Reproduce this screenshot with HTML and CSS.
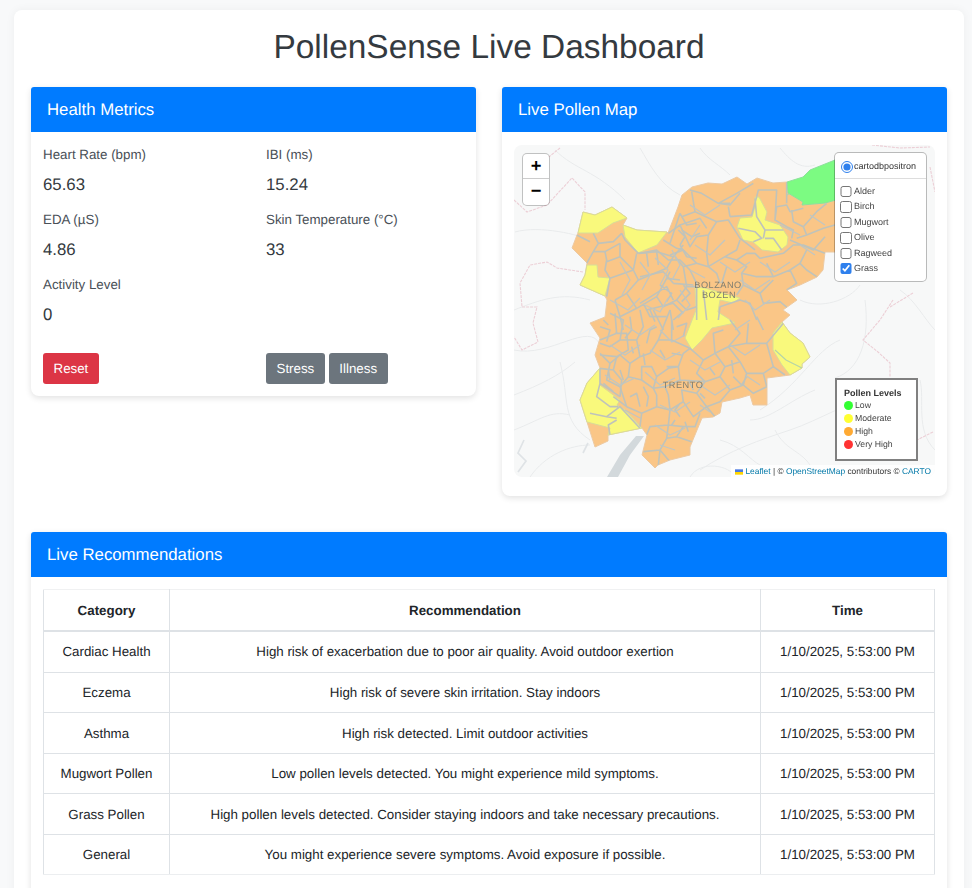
FILE: index.html
```html
<!DOCTYPE html>
<html lang="en">
<head>
<meta charset="utf-8">
<title>PollenSense Live Dashboard</title>
<link rel="stylesheet" href="styles.css">
</head>
<body>
<main class="shell">
  <h1 class="title">PollenSense Live Dashboard</h1>
  <div class="columns">
    <section class="card metrics-card">
      <header class="card-head">Health Metrics</header>
      <div class="card-body">
        <div class="metrics">
          <div class="metric"><div class="metric-label">Heart Rate (bpm)</div><div class="metric-value">65.63</div></div>
          <div class="metric"><div class="metric-label">IBI (ms)</div><div class="metric-value">15.24</div></div>
          <div class="metric"><div class="metric-label">EDA (µS)</div><div class="metric-value">4.86</div></div>
          <div class="metric"><div class="metric-label">Skin Temperature (°C)</div><div class="metric-value">33</div></div>
          <div class="metric"><div class="metric-label">Activity Level</div><div class="metric-value">0</div></div>
        </div>
        <div class="actions">
          <div><button class="btn btn-red">Reset</button></div>
          <div class="btn-group"><button class="btn btn-grey">Stress</button><button class="btn btn-grey">Illness</button></div>
        </div>
      </div>
    </section>
    <section class="card map-card">
      <header class="card-head">Live Pollen Map</header>
      <div class="card-body map-body">
        <div class="map">
          <svg class="map-svg" viewBox="514 145 421 332" width="421" height="332">
            <defs>
              <filter id="soft" x="-5%" y="-5%" width="110%" height="110%" color-interpolation-filters="sRGB"><feGaussianBlur stdDeviation="0.75"/></filter>
              <clipPath id="region"><path d="M583,212 595,215 612,207 627,218 623,225 637,230 667,232 668,233 673,220 678,207 682,195 692,187 708,183 722,184 737,177 747,184 757,178 773,183 787,182 788,193 803,202 802,205 825,203 836,200 836,252 825,252 823,270 817,277 800,285 787,290 797,300 783,310 790,315 782,322 790,333 803,343 810,357 802,364 802,368 790,375 767,378 767,405 753,405 750,395 740,398 722,402 720,413 713,417 702,418 690,447 690,455 670,460 658,465 655,468 642,455 647,435 642,428 608,435 608,441 595,447 587,422 580,400 587,383 600,368 595,355 600,338 590,323 605,317 607,300 605,296 580,285 585,275 587,263 572,248 577,235 578,233Z"/></clipPath>
            </defs>
            <rect class="m-land" x="514" y="145" width="421" height="332"/>
            <g filter="url(#soft)">
              <path class="m-terrain" d="M514,310 C540,300 560,292 590,300 M514,350 C550,358 590,320 600,345 M514,395 C540,385 560,375 575,362 M560,362 C570,400 560,420 590,440 M514,430 C540,420 550,410 570,415 M530,477 C545,455 570,445 590,445 M555,150 C575,170 595,170 625,200 M515,232 C540,225 580,235 590,240 M640,148 C650,165 660,185 680,195 M700,148 C708,160 720,165 730,175 M780,148 C790,160 800,170 815,165 M700,470 C730,450 760,440 790,430 C820,420 850,400 880,395 M800,300 C820,310 850,300 860,285 M865,300 C870,340 860,370 835,378 M750,420 C770,420 790,400 815,390 M840,340 C815,350 800,385 760,410 M690,477 C700,460 730,465 735,477 M900,290 C915,300 925,320 935,330 M920,380 C925,400 915,430 935,450 M775,430 C785,450 800,450 810,465 M720,440 C740,445 750,460 760,465"/>
              <path class="m-border" d="M514,200 527,212 547,205 558,193 572,178 585,192 585,210 M583,272 557,268 547,262 530,265 520,283 522,307 537,307 533,323 538,342 522,350 514,337 M893,300 880,320 863,340 878,352 890,363 890,377 M933,432 917,440 M872,145 900,148 930,147 M930,167 935,192 M913,293 890,307 M560,148 545,160"/>
              <path class="m-lake" d="M636,436 644,436 630,455 618,477 607,477 620,455Z"/>
              <path class="m-river" d="M524,440 518,453 526,461 518,472 M588,443 583,453"/>
              <path class="m-orange" d="M583,212 595,215 612,207 627,218 623,225 637,230 667,232 668,233 673,220 678,207 682,195 692,187 708,183 722,184 737,177 747,184 757,178 773,183 787,182 788,193 803,202 802,205 825,203 836,200 836,252 825,252 823,270 817,277 800,285 787,290 797,300 783,310 790,315 782,322 790,333 803,343 810,357 802,364 802,368 790,375 767,378 767,405 753,405 750,395 740,398 722,402 720,413 713,417 702,418 690,447 690,455 670,460 658,465 655,468 642,455 647,435 642,428 608,435 608,441 595,447 587,422 580,400 587,383 600,368 595,355 600,338 590,323 605,317 607,300 605,296 580,285 585,275 587,263 572,248 577,235 578,233Z"/>
              <g class="m-yellow">
                <path d="M583,212 595,215 612,207 627,218 613,223 598,233 578,233Z"/>
                <path d="M623,225 637,230 667,232 657,245 638,253 625,237Z"/>
                <path d="M587,265 597,265 598,277 610,278 605,296 580,285 585,275Z"/>
                <path d="M755,197 759,197 767,212 765,220 780,225 788,237 787,245 778,252 762,250 753,242 743,240 737,227 740,218 752,217 755,207Z"/>
                <path d="M695,287 705,288 740,298 733,303 720,300 718,312 735,323 712,328 702,340 692,350 685,338 696,310Z"/>
                <path d="M782,322 790,333 803,343 810,357 802,364 802,368 790,375 782,365 773,350 773,333Z"/>
                <path d="M600,368 587,383 580,400 587,422 610,428 608,435 642,428 625,410 617,405 620,400 600,385Z"/>
              </g>
              <path class="m-green" d="M787,182 803,177 810,170 835,160 836,200 825,203 802,205 803,202 788,193Z"/>
              <g clip-path="url(#region)">
                <g class="m-lines" transform="translate(640 170) scale(.33333)">
                  <path d="M150,60 185,70 235,100 290,70 340,40 M235,100 270,105 300,70 M235,100H270 M155,65 165,125 230,155 265,150 300,205 320,220 M265,110 270,140 M270,140 335,135 350,80 M125,140 165,125 M85,190 120,165 150,230 170,200 205,195 230,155 M120,165 180,145 200,175 M205,195 200,250 205,290 M300,210 290,240 255,260 205,290 170,280 130,240 90,255 M70,210 110,235 130,240 M0,250 50,240 85,270 120,270 150,300 170,340 M255,260 290,270 320,250 345,250 360,265 M320,220 345,240 M360,265 430,250 460,225 490,225 555,250 M290,270 320,290 305,310 350,320 400,320 450,300 480,280 500,240 M450,210 520,240 555,200 M455,205 460,180 440,170 405,150 410,110 440,105 450,125 490,115 M350,80 355,60 410,60 405,150 M440,35 440,100 M455,120 460,155 490,170 500,195 550,175 585,165 M490,170 530,125 560,100 M500,195 470,205 M400,320 380,280 M480,280 500,300 530,320 M450,300 470,340 440,360 M305,310 310,345 290,375 M310,345 360,370 400,330 M360,370 370,400 420,395 450,420 M240,410 300,390 330,400 350,450 M240,410 235,450 M205,290 230,310 240,340 M260,290 245,340 M0,320 70,305 100,340 M0,400 80,350 100,390 M100,340 160,345 M20,420 100,400 130,430 M170,340V450 M190,360 200,450 M345,85 350,140 375,180 430,180 M295,175 345,185 365,205 340,215 M375,205 400,205 425,240 M375,180 370,205 M115,180 135,200 120,225 M60,345 95,370 80,395 M130,345 150,370 125,395"/>
                </g>
                <g class="m-lines" transform="translate(570 200) scale(.33333)">
                  <path d="M50,190 70,155 85,130 70,100 M20,105 60,125 M85,130 130,125 155,100 M155,100 165,120 205,160 M70,155 105,155 110,180 105,210 120,235 M105,155 150,130 M150,130 150,170 110,185 M150,170 190,210 200,160 M190,210 120,235 M120,235 110,290 M190,210 205,240 170,280 135,300 M205,240 290,205 310,170 340,135 M205,160 260,155 310,170 M230,160 235,200 M260,155 265,195 M170,280 200,325 260,290 290,235 300,215 M135,300 150,350 200,325 M150,350 160,390 M260,290 280,320 320,300 350,260 380,260 M290,235 330,240 M300,130 330,40 M330,135 350,170 380,175 M315,170 340,200 380,190 M340,200 350,260 M220,310 240,350 290,350 M250,330 280,390 M300,330 310,390 M320,300 350,330 380,320 M340,335 310,360 M330,40 350,75 380,70 M335,90 365,110 390,100"/>
                </g>
                <g class="m-lines" transform="translate(600 310) scale(.33333)">
                  <path d="M0,100 30,110 60,90 70,30 30,10 M60,90 110,90 130,50 120,0 M110,90 120,140 150,130 175,90 190,50 210,0 M175,90 215,90 215,30 M215,90 270,115 250,130 235,170 200,170 M0,130 30,160 60,135 90,160 120,140 M30,160 20,210 60,230 85,200 90,160 M85,200 125,210 125,170 155,170 170,200 160,235 125,210 M170,200 205,175 235,170 240,210 195,230 160,235 M60,230 80,290 125,310 170,290 170,255 160,235 M125,310 120,350 M80,290 40,260 M170,290 210,300 205,255 195,230 M210,300 250,275 245,240 290,250 315,215 240,210 M270,115 310,150 345,130 385,110 440,100 445,40 M310,150 290,190 315,215 360,200 375,170 345,130 M360,200 390,240 360,275 M375,170 420,155 440,190 430,225 390,240 M430,225 460,250 500,230 M440,190 490,190 520,170 500,100 440,100 M490,190 500,230 M500,100 550,40 M520,170 555,195 M385,110 420,155 M345,130 340,70 370,60 M290,250 320,290 360,275 M320,290 345,320 M250,275 280,320 300,305 320,290 M210,300 205,345 150,350 140,375 M205,345 200,385 230,380 275,395 M205,345 250,350 285,350 300,310 M250,350 230,380 M200,385 180,420 130,425 M180,420 210,455 M180,420 175,465 M240,280 225,300 240,320 M300,250 315,265 M400,200 425,225 440,200 M130,230 145,260 140,290 M90,260 110,250 120,290 M30,210 25,180 M10,220 40,245 M170,50 150,60 140,100 M230,50 260,40 250,80 M0,50 30,60 20,95 M90,20 95,60 75,85 M150,0 165,35 M390,30 420,70 385,110 M470,20 490,60 M395,150 400,190 M330,175 345,195 M215,130 245,135 M265,210 280,240 M100,130 95,110 M60,180 70,210 M180,120 195,145 M130,130 135,165 M255,335 265,365 M225,330 215,345"/>
                </g>
                <g class="m-lines" transform="translate(500 300) scale(.33333)">
                  <path d="M300,250 290,290 330,320 355,320 M270,340 320,350 360,320 420,385 M320,350 350,355 M300,205 300,250 360,290 M330,405 325,375 350,360 M310,60 325,75 M300,120 350,100 345,40 M300,205 340,210 350,170 300,165 M350,170 385,150 380,100 345,100 M340,210 365,240 360,290"/>
                </g>
                <path class="m-lines-fine" d="M640,262 650,275 642,290 M655,258 668,270 660,285 M672,250 680,265 672,280 M620,262 630,280 622,295 M610,300 628,310 640,298 M645,305 660,312 668,298 M680,290 690,305 678,318 M625,325 640,335 655,325 M660,330 672,342 685,335 M610,345 625,355 640,345 M650,350 665,360 680,352 M605,375 620,385 635,378 M645,372 660,385 675,378 M690,360 705,370 720,362 M730,345 745,355 760,345 M770,300 755,310 745,300 M735,330 750,320 M700,385 715,395 730,385 M745,375 760,385 M660,405 675,412 690,402 M700,405 710,412 M625,410 640,418 M655,425 670,435 685,428 M660,445 675,450 M720,262 735,272 750,262 M760,262 775,272 790,262 M800,245 815,255 M690,205 705,215 720,205 M725,240 710,255 695,245 M690,270 705,278 M740,280 755,290 770,280 M780,225 800,235 M810,215 825,225 M700,225 690,240"/>
                <path class="m-lines-thin" d="M775,350 786,360 802,368 M824,165 836,161 M787,195 826,178 836,172 M803,205 825,195 826,178"/>
              </g>
              <g class="m-labels">
                <text x="718" y="288">BOLZANO</text>
                <text x="719" y="298">BOZEN</text>
                <text x="683" y="388">TRENTO</text>
              </g>
            </g>
          </svg>
          <div class="zoom-ctl">
            <a class="zoom-btn">+</a>
            <a class="zoom-btn">−</a>
          </div>
          <form class="layers">
            <label class="layer-row layer-base"><input class="layer-radio" type="radio" checked><span>cartodbpositron</span></label>
            <div class="layer-sep"></div>
            <label class="layer-row"><input class="layer-check" type="checkbox"><span>Alder</span></label>
            <label class="layer-row"><input class="layer-check" type="checkbox"><span>Birch</span></label>
            <label class="layer-row"><input class="layer-check" type="checkbox"><span>Mugwort</span></label>
            <label class="layer-row"><input class="layer-check" type="checkbox"><span>Olive</span></label>
            <label class="layer-row"><input class="layer-check" type="checkbox"><span>Ragweed</span></label>
            <label class="layer-row"><input class="layer-check" type="checkbox" checked><span>Grass</span></label>
          </form>
          <div class="legend">
            <div class="legend-title">Pollen Levels</div>
            <div class="legend-row"><i class="dot dot-low"></i>Low</div>
            <div class="legend-row"><i class="dot dot-mod"></i>Moderate</div>
            <div class="legend-row"><i class="dot dot-high"></i>High</div>
            <div class="legend-row"><i class="dot dot-vhigh"></i>Very High</div>
          </div>
          <div class="attrib"><svg class="flag" viewBox="0 0 12 8" width="8" height="6"><rect width="12" height="4" fill="#4C7BE1"/><rect y="4" width="12" height="4" fill="#FFD500"/></svg> <a>Leaflet</a> | © <a>OpenStreetMap</a> contributors © <a>CARTO</a></div>
        </div>
      </div>
    </section>
  </div>
  <section class="card rec-card">
    <header class="card-head">Live Recommendations</header>
    <div class="card-body rec-body">
      <table class="rec-table">
        <colgroup><col class="col-cat"><col class="col-rec"><col class="col-time"></colgroup>
        <thead><tr><th>Category</th><th>Recommendation</th><th>Time</th></tr></thead>
        <tbody>
          <tr><td>Cardiac Health</td><td>High risk of exacerbation due to poor air quality. Avoid outdoor exertion</td><td>1/10/2025, 5:53:00 PM</td></tr>
          <tr><td>Eczema</td><td>High risk of severe skin irritation. Stay indoors</td><td>1/10/2025, 5:53:00 PM</td></tr>
          <tr><td>Asthma</td><td>High risk detected. Limit outdoor activities</td><td>1/10/2025, 5:53:00 PM</td></tr>
          <tr><td>Mugwort Pollen</td><td>Low pollen levels detected. You might experience mild symptoms.</td><td>1/10/2025, 5:53:00 PM</td></tr>
          <tr><td>Grass Pollen</td><td>High pollen levels detected. Consider staying indoors and take necessary precautions.</td><td>1/10/2025, 5:53:00 PM</td></tr>
          <tr><td>General</td><td>You might experience severe symptoms. Avoid exposure if possible.</td><td>1/10/2025, 5:53:00 PM</td></tr>
        </tbody>
      </table>
    </div>
  </section>
</main>
</body>
</html>
```
FILE: styles.css
```css
* { box-sizing: border-box; }
html, body { height: 888px; overflow: hidden; }
body {
  margin: 0;
  padding: 10px 8px 0 14px;
  background: #f8f9fa;
  font-family: "Liberation Sans", Arial, sans-serif;
  font-size: 13.33px;
  line-height: 1.5;
  color: #212529;
  text-rendering: geometricPrecision;
}
.shell {
  background: #fff;
  border-radius: 8px;
  padding: 17px 17px 0;
  box-shadow: 0 0 10px rgba(0,0,0,.05);
}
.title {
  margin: 0 0 18px;
  text-align: center;
  font-size: 33.44px;
  font-weight: 400;
  line-height: 42px;
  color: #343a40;
}
.columns {
  display: grid;
  grid-template-columns: 445px 445px;
  gap: 26px;
  align-items: start;
  margin-bottom: 36px;
}
.card {
  background: #fff;
  border-radius: 3px 3px 8px 8px;
  box-shadow: 0 2px 6px rgba(0,0,0,.12);
}
.card-head {
  background: #007bff;
  color: #fff;
  font-size: 16.8px;
  line-height: 46px;
  height: 45px;
  padding: 0 16px;
  border-radius: 3px 3px 0 0;
}
.card-body { padding: 12px; }
.metrics {
  display: grid;
  grid-template-columns: 223px 1fr;
}
.metric { height: 65px; }
.metric-label {
  color: #495057;
  line-height: 21px;
}
.metric-value {
  margin-top: 7px;
  font-size: 16.8px;
  line-height: 26px;
  color: #343a40;
}
.actions {
  display: grid;
  grid-template-columns: 223px 1fr;
  margin-top: 14px;
}
.btn-group { display: flex; gap: 4px; }
.btn {
  display: block;
  height: 31px;
  padding: 0 10.5px;
  border: 0;
  border-radius: 3px;
  font: inherit;
  line-height: 31px;
  color: #fff;
  text-rendering: geometricPrecision;
}
.btn-red { background: #dc3545; }
.btn-grey { background: #6c757d; }

.map-body { padding: 13px 12px 19px; }
.map {
  position: relative;
  width: 421px;
  height: 332px;
  border-radius: 8px;
  overflow: hidden;
}
.map-svg { display: block; }
.m-land { fill: #f7f8f8; }
.m-terrain { fill: none; stroke: #e9ebec; stroke-width: 1; }
.m-border { fill: none; stroke: #eccfd6; stroke-width: 1.1; stroke-dasharray: 3 1; }
.m-lake { fill: #d3d9dc; }
.m-river { fill: none; stroke: #dfe3e6; stroke-width: 1.7; }
.m-orange { fill: #fac687; stroke: #ecc9a2; stroke-width: 1; }
.m-yellow path { fill: #f9f97c; stroke: #d8dc98; stroke-width: 1; }
.m-green { fill: #7cfb82; stroke: #8ce09a; stroke-width: 1; }
.m-lines { fill: none; stroke: #bfc3bb; stroke-width: 4.8; stroke-linejoin: round; }
.m-lines-fine { fill: none; stroke: #c0c6c2; stroke-width: 1.3; stroke-linejoin: round; }
.m-lines-thin { fill: none; stroke: #b5d4a8; stroke-width: 1.2; }
.m-labels text {
  font-size: 9.2px;
  letter-spacing: .5px;
  text-anchor: middle;
  fill: #7f7e70;
}

.zoom-ctl {
  position: absolute;
  left: 9px;
  top: 9px;
  width: 26px;
  background: #fff;
  border-radius: 4px;
  box-shadow: 0 0 0 1px rgba(0,0,0,.22);
  overflow: hidden;
}
.zoom-btn {
  display: block;
  height: 25px;
  text-align: center;
  font: 700 17px/24px "DejaVu Sans Mono", monospace;
  color: #000;
  border-bottom: 1px solid #ccc;
}
.zoom-btn:last-child { border-bottom: 0; height: 26px; }

.layers {
  position: absolute;
  left: 321px;
  top: 8px;
  width: 91px;
  height: 128px;
  margin: 0;
  padding: 7px 5px;
  background: #fff;
  border-radius: 4px;
  box-shadow: 0 0 0 1px rgba(0,0,0,.25);
  font-size: 9px;
  line-height: 15.4px;
  color: #444;
  filter: blur(.25px);
}
.layer-row {
  display: flex;
  align-items: center;
  height: 15.4px;
  gap: 2.5px;
  white-space: nowrap;
}
.layer-radio, .layer-check {
  flex: none;
  width: 11.5px;
  height: 11.5px;
  margin: 0;
  accent-color: #2f80ed;
}
.layer-base { height: 14px; margin-left: 1px; gap: 1.5px; color: #333; }
.layer-sep { margin: 4px -5px 5px; border-top: 1px solid #ddd; }

.legend {
  position: absolute;
  left: 321px;
  top: 233px;
  width: 83px;
  height: 83px;
  padding: 7px 7px;
  background: #fff;
  border: 2px solid #808080;
  font-size: 8.7px;
  line-height: 13px;
  color: #444;
  filter: blur(.2px);
}
.legend-title { font-weight: 700; font-size: 9px; line-height: 12px; color: #333; }
.legend-row { display: flex; align-items: center; gap: 2px; white-space: nowrap; }
.dot { flex: none; width: 9px; height: 9px; border-radius: 50%; }
.dot-low { background: #33ff33; }
.dot-mod { background: #ffff33; }
.dot-high { background: #ffaa33; }
.dot-vhigh { background: #ff3333; }

.attrib {
  position: absolute;
  right: 0;
  bottom: 0;
  height: 12px;
  padding: 0 4px;
  background: rgba(255,255,255,.8);
  font-size: 8.38px;
  line-height: 13px;
  color: #333;
  white-space: nowrap;
  filter: blur(.2px);
}
.attrib a { color: #0078a8; }
.flag { vertical-align: -0.5px; }

.rec-card { border-radius: 3px 3px 0 0; }
.rec-body { padding-bottom: 24px; }
.rec-table {
  width: 891px;
  table-layout: fixed;
  border-collapse: collapse;
}
.col-cat { width: 126px; }
.col-rec { width: 591px; }
.col-time { width: 174px; }
.rec-table th, .rec-table td {
  padding: 9.28px 12px;
  line-height: 21px;
  text-align: center;
  border: 1px solid #dee2e6;
}
.rec-table th {
  padding: 9.6px 12px;
  font-weight: 700;
  border-top-color: #f0f1f2;
  border-bottom-width: 2px;
}
.rec-table tbody tr:last-child td { border-bottom-color: #eceef0; }
```
